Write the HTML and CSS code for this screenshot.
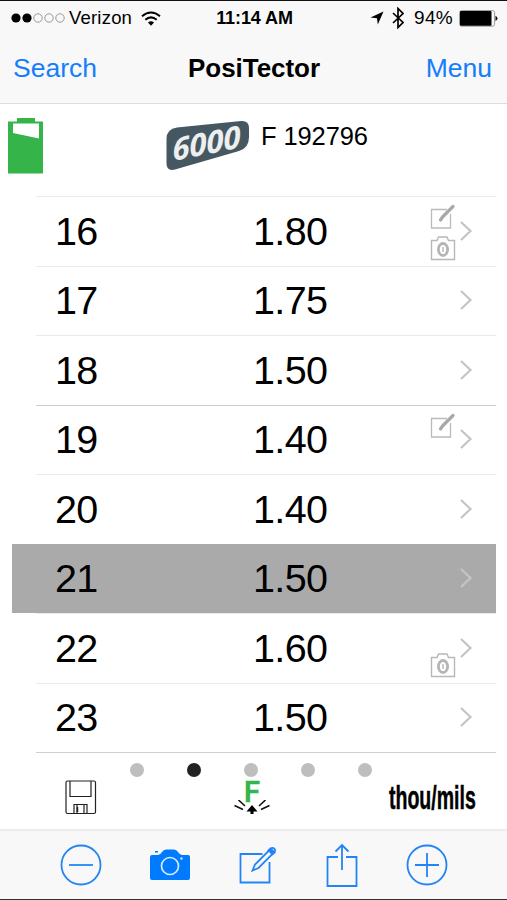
FILE: index.html
```html
<!DOCTYPE html>
<html lang="en">
<head>
<meta charset="utf-8">
<title>PosiTector</title>
<link rel="stylesheet" href="styles.css">
</head>
<body>
<svg class="defs" width="0" height="0">
  <symbol id="chevron" viewBox="0 0 14 22"><path d="M2 2l9.500 9L2 20" fill="none" stroke="#c5c5c7" stroke-width="2.200"/></symbol>
  <symbol id="note" viewBox="0 0 26 26"><path d="M17 5.500H1.500v18.500H20.500V10" fill="none" stroke="#bababa" stroke-width="1.300"/><path d="M10.500 16l2-3L23 2.500" fill="none" stroke="#a8a8a8" stroke-width="3.200" stroke-linecap="round" stroke-linejoin="round"/></symbol>
  <symbol id="photo" viewBox="0 0 26 26"><path d="M1.500 5.500h5.500l1.500-3.500h8.500l1.500 3.500h6v19h-23z" fill="none" stroke="#b8b8b8" stroke-width="1.400"/><ellipse cx="13" cy="14.500" rx="4.600" ry="6" fill="none" stroke="#b5b5b5" stroke-width="2.800"/><path d="M13 12v5" stroke="#bbb" stroke-width="1.500"/></symbol>
</svg>
<div class="screen">
  <header class="top">
    <div class="status">
      <div class="carrier">
        <svg width="54" height="12" viewBox="0 0 54 12"><g fill="#000"><circle cx="5" cy="6" r="4.600"/><circle cx="16" cy="6" r="4.600"/></g><g fill="none" stroke="#999"><circle cx="27" cy="6" r="4.200"/><circle cx="38" cy="6" r="4.200"/><circle cx="49" cy="6" r="4.200"/></g></svg>
        <span class="verizon">Verizon</span>
        <svg class="wifi" width="20" height="15" viewBox="0 0 20 15"><g fill="none" stroke="#000" stroke-width="2"><path d="M1 5.200q9-7.500 18 0"/><path d="M4.300 8.700q5.700-4.700 11.400 0"/></g><path d="M7 11.400q3-2.300 6 0l-3 3.300z"/></svg>
      </div>
      <span class="clock">11:14 AM</span>
      <div class="power">
        <svg width="14" height="14" viewBox="0 0 14 14"><path d="M13.500.5L7.800 13.500 7 7.200.5 6.500z"/></svg>
        <svg class="bt" width="12" height="22" viewBox="0 0 12 22"><path d="M1 6l10 9.500-5 5V1.500l5 5L1 16" fill="none" stroke="#000" stroke-width="1.700"/></svg>
        <span class="percent">94%</span>
        <svg class="cell" width="39" height="17" viewBox="0 0 39 17"><rect x=".6" y=".6" width="35" height="15.600" rx="2" fill="none" stroke="#999"/><rect x="1" y="1" width="31.500" height="14.800" rx="1"/><path d="M36.500 5.800q4 2.600 0 5.200z"/></svg>
      </div>
    </div>
    <nav class="nav">
      <span class="link search">Search</span>
      <h1>PosiTector</h1>
      <span class="link menu">Menu</span>
    </nav>
  </header>

  <section class="device">
    <svg class="charge" width="36" height="56" viewBox="0 0 36 56"><path d="M0 3.500h9V0h18v3.500h8V55.500H0z" fill="#35b449"/><path d="M5 5.500h26v15L5 15z" fill="#fff"/></svg>
    <svg class="badge" width="84" height="52" viewBox="0 0 84 52"><path d="M11 6.500L75 0q8-.5 8 7v9q0 11-10 14L9 48.500q-8.500 2-8.500-6V18Q.5 8 11 6.500z" fill="#455760"/><text transform="matrix(1 -.2 .05 1 7 40)" textLength="68" lengthAdjust="spacing">6000</text></svg>
    <span class="serial">F 192796</span>
  </section>

  <main class="readings">
    <div class="row"><span class="idx">16</span><span class="val">1.80</span><span class="marks"><svg><use href="#note"/></svg><svg class="low"><use href="#photo"/></svg></span><svg class="go"><use href="#chevron"/></svg></div>
    <div class="row"><span class="idx">17</span><span class="val">1.75</span><span class="marks"></span><svg class="go"><use href="#chevron"/></svg></div>
    <div class="row"><span class="idx">18</span><span class="val">1.50</span><span class="marks"></span><svg class="go"><use href="#chevron"/></svg></div>
    <div class="row strong"><span class="idx">19</span><span class="val">1.40</span><span class="marks"><svg><use href="#note"/></svg></span><svg class="go"><use href="#chevron"/></svg></div>
    <div class="row"><span class="idx">20</span><span class="val">1.40</span><span class="marks"></span><svg class="go"><use href="#chevron"/></svg></div>
    <div class="row selected"><span class="idx">21</span><span class="val">1.50</span><span class="marks"></span><svg class="go"><use href="#chevron"/></svg></div>
    <div class="row"><span class="idx">22</span><span class="val">1.60</span><span class="marks"><svg class="low"><use href="#photo"/></svg></span><svg class="go"><use href="#chevron"/></svg></div>
    <div class="row"><span class="idx">23</span><span class="val">1.50</span><span class="marks"></span><svg class="go"><use href="#chevron"/></svg></div>
  </main>

  <section class="modes">
    <div class="pager"><i></i><i class="on"></i><i></i><i></i><i></i></div>
    <div class="info">
      <svg class="disk" width="32" height="35" viewBox="0 0 32 35"><g fill="none" stroke="#222" stroke-width="1.200"><rect x="1" y="1" width="29.500" height="32.500" rx="1.500"/><path d="M5 1v15.500h21V1M9 33.500V24.500h13v9M12 24.500v9M19 24.500v9"/></g><path d="M12.500 27v5" stroke="#222" stroke-width="1.500"/></svg>
      <div class="probe"><b>F</b><svg width="36" height="17" viewBox="0 0 36 17"><g stroke="#111" stroke-width="1.600"><path d="M4.500 0l6.500 6M.5 5.500l8.500 4M31.500 0l-6.500 6M35.500 5.500l-8.500 4"/></g><path d="M18 5l5.500 6.500h-4V14h-3v-2.500h-4z"/></svg></div>
      <span class="units">thou/mils</span>
    </div>
  </section>

  <footer class="toolbar">
    <svg width="42" height="42" viewBox="0 0 42 42"><circle cx="21" cy="21" r="19.500"/><path d="M9 21h24"/></svg>
    <svg class="camera" width="42" height="42" viewBox="0 0 42 42"><path class="fill" d="M1 13q0-2 2-2h6q2 0 4-3 1.500-2.500 4-2.500h8q2.500 0 4 2.500 2 3 4 3h6q2 0 2 2v21q0 2-2 2H3q-2 0-2-2zM6 7h3v1.500H6z"/><circle class="lens" cx="21" cy="22" r="8.500"/><circle class="dot" cx="32.500" cy="14.500" r="1.300"/></svg>
    <svg class="compose" width="42" height="42" viewBox="0 0 42 42"><path d="M25.500 10H3.500v28.500h29V18"/><path d="M15.500 26.500l2.500-6L34 4.500q1.800-1.300 3.300.2t.2 3.300L21.500 24z"/><path d="M33.500 4.500l4 4-2 1.800-4-4z" fill="#1683ff"/></svg>
    <svg width="42" height="46" viewBox="0 0 42 46"><path d="M17 15H6.500v29h29V15H25M21 28V3M14.500 9.500L21 3l6.500 6.500"/></svg>
    <svg width="42" height="42" viewBox="0 0 42 42"><circle cx="21" cy="21" r="19.500"/><path d="M9 21h24M21 9v24"/></svg>
  </footer>
</div>
</body>
</html>
```
FILE: styles.css
```css
* { box-sizing: border-box; }
body { margin: 0; background: #fff; color: #000; font-family: "Liberation Sans", Arial, sans-serif; }
svg { display: block; flex: none; }
.defs { display: none; }
.screen { width: 507px; height: 900px; display: flex; flex-direction: column; overflow: hidden; border-top: 1px solid #111; border-bottom: 1px solid #333; }
.screen > * { flex: none; }
.top { height: 103px; background: #f8f8f8; border-bottom: 1px solid #dcdcdc; }
.status { height: 34px; display: grid; grid-template-columns: 1fr auto 1fr; align-items: center; padding: 0 9px 0 11px; font-size: 18px; line-height: 34px; }
.carrier, .power { display: flex; align-items: center; }
.verizon { margin-left: 4px; font-size: 18.500px; letter-spacing: .2px; }
.wifi { margin-left: 9px; }
.clock { font-weight: bold; letter-spacing: -.1px; }
.power { justify-content: flex-end; }
.bt { margin-left: 8px; }
.percent { margin: 0 6px 0 10px; font-size: 19px; letter-spacing: .3px; }
.nav { height: 67px; display: grid; grid-template-columns: 1fr auto 1fr; align-items: center; padding: 0 15px 0 13px; font-size: 26.500px; }
.nav h1 { margin: 0; padding-left: 3px; font-size: 26px; letter-spacing: -.05px; }
.link { color: #147efb; }
.menu { text-align: right; }
.device { height: 92px; display: flex; padding-left: 8px; }
.charge { margin-top: 14px; }
.badge { margin: 17px 0 0 122px; overflow: visible; }
.badge text { font: italic bold 31px "Open Sans", sans-serif; fill: #eceeef; }
.serial { margin: 17px 0 0 11px; font-size: 25.500px; line-height: 30px; letter-spacing: -.1px; }
.readings { display: grid; grid-template-rows: repeat(8, 69.500px); margin: 0 11px 0 12px; }
.row { display: grid; grid-template-columns: 217px 1fr 26px 26px 14px; align-items: center; padding-left: 24px; font-size: 39.500px; letter-spacing: -.6px; line-height: 68px; background: linear-gradient(#e9e9e9, #e9e9e9) 24px 0 / 100% 1px no-repeat; }
.strong { background-image: linear-gradient(#cfcfcf, #cfcfcf); }
.selected { background: #aaa; }
.idx { padding-left: 19px; }
.marks { align-self: stretch; display: grid; grid-template-rows: 25px 26px; padding-top: 8px; row-gap: 6px; }
.marks svg { width: 26px; height: 26px; }
.marks .low { grid-row: 2; }
.go { width: 14px; height: 22px; margin-left: 3px; }
.modes { height: 77px; margin: 0 0 0 36px; display: flex; flex-direction: column; background: linear-gradient(#cfcfcf, #cfcfcf) 0 0 / 460px 1px no-repeat; }
.pager { display: flex; gap: 43px; padding: 11px 0 0 94px; }
.pager i { width: 14px; height: 14px; border-radius: 50%; background: #bebebe; }
.pager .on { background: #222; }
.info { display: flex; }
.disk { margin: 3px 0 0 29px; }
.probe { width: 36px; margin: 6px 0 0 137px; display: flex; flex-direction: column; align-items: center; }
.probe b { color: #35b449; font: 500 29px/19px Roboto, sans-serif; -webkit-text-stroke: .6px #35b449; }
.probe svg { margin-top: -2px; }
.units { margin: 3px 0 0 119px; font-size: 33.500px; line-height: 36px; font-weight: bold; white-space: nowrap; -webkit-text-stroke: .5px #000; transform: scaleX(.583); transform-origin: 0 50%; }
.toolbar { height: 70px; background: #f8f8f8; border-top: 2px solid #ececec; display: flex; align-items: center; justify-content: space-between; padding: 0 59px 0 60px; }
.toolbar svg { fill: none; stroke: #2384f5; stroke-width: 1.800; }
.toolbar .camera { margin-left: 4px; }
.toolbar .compose { margin-left: 3px; }
.toolbar .fill { fill: #007aff; stroke: none; }
.toolbar .lens { stroke: #d8eaff; stroke-width: 1.700; }
.toolbar .dot { fill: #b9dcff; stroke: none; }
```
